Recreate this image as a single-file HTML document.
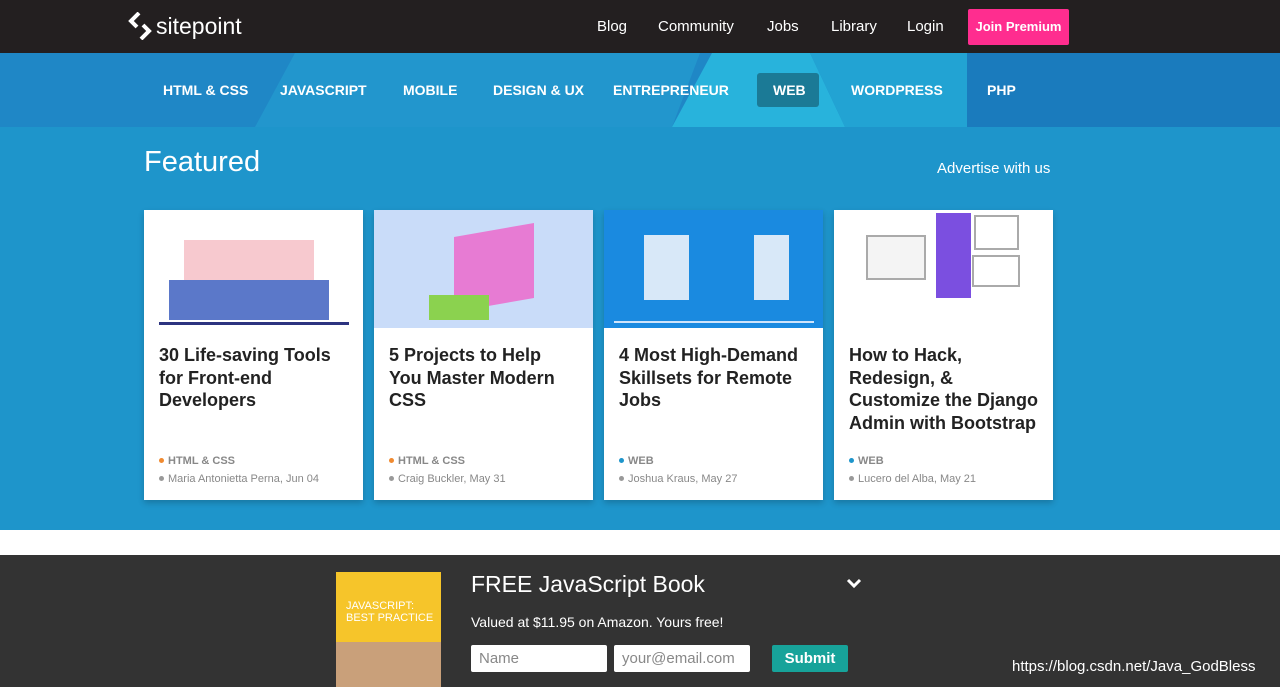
<!DOCTYPE html>
<html><head><meta charset="utf-8"><style>
*{margin:0;padding:0;box-sizing:border-box}
body{width:1280px;height:687px;overflow:hidden;font-family:"Liberation Sans",sans-serif;background:#fff;position:relative}
.hdr{position:absolute;left:0;top:0;width:1280px;height:53px;background:#231f20}
.logo{position:absolute;left:128px;top:12px;color:#fff;font-size:23px;display:flex;align-items:center;gap:4px}
.tnav{position:absolute;top:18px;color:#fff;font-size:15px}
.jp{position:absolute;left:968px;top:9px;width:101px;height:36px;background:#ff2d8f;color:#fff;font-size:13px;font-weight:bold;text-align:center;line-height:36px;border-radius:2px}
.nav{position:absolute;left:0;top:53px;width:1280px;height:74px;background:#1f87c6;overflow:hidden}
.nav span{position:absolute;top:29px;color:#fff;font-size:14px;font-weight:bold}
.feat{position:absolute;left:0;top:127px;width:1280px;height:403px;background:#1e95cb}
.card{position:absolute;top:210px;width:219px;height:290px;background:#fff;box-shadow:0 3px 6px rgba(0,0,0,.2)}
.img{height:118px;position:relative;overflow:hidden}
.t{position:absolute;left:15px;top:134px;width:190px;font-size:18px;font-weight:bold;color:#222;line-height:22.5px}
.m{position:absolute;left:15px;font-size:11px;color:#888}
.m i{display:inline-block;width:5px;height:5px;border-radius:50%;margin-right:4px;vertical-align:1px}
.bot{position:absolute;left:0;top:555px;width:1280px;height:132px;background:#333}
</style></head><body>
<div class="hdr">
<div class="logo"><svg width="24" height="28" viewBox="0 0 24 28"><path d="M11 1L3 9l6 6M13 27l8-8-6-6" stroke="#fff" stroke-width="4" fill="none"/></svg>sitepoint</div>
<div class="tnav" style="left:597px">Blog</div>
<div class="tnav" style="left:658px">Community</div>
<div class="tnav" style="left:767px">Jobs</div>
<div class="tnav" style="left:831px">Library</div>
<div class="tnav" style="left:907px">Login</div>
<div class="jp">Join Premium</div>
</div>
<div class="nav">
<svg width="1280" height="74" style="position:absolute;left:0;top:0"><polygon points="295,0 700,0 672,74 255,74" fill="#2296cd"/><polygon points="712,0 810,0 845,74 672,74" fill="#28b3dc"/><polygon points="810,0 967,0 967,74 845,74" fill="#22a3d3"/><rect x="967" y="0" width="313" height="74" fill="#1a7bbd"/></svg>
<span style="left:163px">HTML &amp; CSS</span>
<span style="left:280px">JAVASCRIPT</span>
<span style="left:403px">MOBILE</span>
<span style="left:493px">DESIGN &amp; UX</span>
<span style="left:613px">ENTREPRENEUR</span>
<div style="position:absolute;left:757px;top:20px;width:62px;height:34px;background:#1b7a96;border-radius:3px"></div>
<span style="left:773px">WEB</span>
<span style="left:851px">WORDPRESS</span>
<span style="left:987px">PHP</span>
</div>
<div class="feat">
<div style="position:absolute;left:144px;top:19px;color:#fff;font-size:29px">Featured</div>
<div style="position:absolute;left:937px;top:33px;color:#fff;font-size:15px">Advertise with us</div>
</div>
<div class="card" style="left:144px"><div class="img" style="background:#fff"><div style="position:absolute;left:40px;top:30px;width:130px;height:70px;background:#f7c9cf"></div><div style="position:absolute;left:25px;top:70px;width:160px;height:40px;background:#5b78c9"></div><div style="position:absolute;left:15px;top:112px;width:190px;height:3px;background:#2d3480"></div></div>
<div class="t">30 Life-saving Tools for Front-end Developers</div>
<div class="m" style="top:245px;font-weight:bold"><i style="background:#f08a30"></i>HTML &amp; CSS</div>
<div class="m" style="top:263px"><i style="background:#999"></i>Maria Antonietta Perna, Jun 04</div></div>
<div class="card" style="left:374px"><div class="img" style="background:#c9dcf9"><div style="position:absolute;left:80px;top:20px;width:80px;height:75px;background:#e77bd3;transform:skewY(-10deg)"></div><div style="position:absolute;left:55px;top:85px;width:60px;height:25px;background:#8bd24f"></div></div>
<div class="t" style="width:175px">5 Projects to Help You Master Modern CSS</div>
<div class="m" style="top:245px;font-weight:bold"><i style="background:#f08a30"></i>HTML &amp; CSS</div>
<div class="m" style="top:263px"><i style="background:#999"></i>Craig Buckler, May 31</div></div>
<div class="card" style="left:604px"><div class="img" style="background:#1a8ae0"><div style="position:absolute;left:40px;top:25px;width:45px;height:65px;background:#d8e8f8"></div><div style="position:absolute;left:150px;top:25px;width:35px;height:65px;background:#d8e8f8"></div><div style="position:absolute;left:10px;top:111px;width:200px;height:2px;background:#cfe4fb"></div></div>
<div class="t">4 Most High-Demand Skillsets for Remote Jobs</div>
<div class="m" style="top:245px;font-weight:bold"><i style="background:#1e95cb"></i>WEB</div>
<div class="m" style="top:263px"><i style="background:#999"></i>Joshua Kraus, May 27</div></div>
<div class="card" style="left:834px"><div class="img" style="background:#fff"><div style="position:absolute;left:102px;top:3px;width:35px;height:85px;background:#7b4fe0"></div><div style="position:absolute;left:32px;top:25px;width:60px;height:45px;border:2px solid #aaa;background:#f4f4f4"></div><div style="position:absolute;left:140px;top:5px;width:45px;height:35px;border:2px solid #aaa"></div><div style="position:absolute;left:138px;top:45px;width:48px;height:32px;border:2px solid #aaa"></div></div>
<div class="t">How to Hack, Redesign, &amp; Customize the Django Admin with Bootstrap</div>
<div class="m" style="top:245px;font-weight:bold"><i style="background:#1e95cb"></i>WEB</div>
<div class="m" style="top:263px"><i style="background:#999"></i>Lucero del Alba, May 21</div></div>
<div class="bot">
<div style="position:absolute;left:336px;top:17px;width:105px;height:115px;background:#f6c52a"><div style="position:absolute;left:10px;top:28px;color:#fff;font-size:11px;line-height:12px;white-space:nowrap">JAVASCRIPT:<br>BEST PRACTICE</div><div style="position:absolute;left:0;top:70px;width:105px;height:45px;background:#c9a07a"></div></div>
<div style="position:absolute;left:471px;top:16px;color:#fff;font-size:23px">FREE JavaScript Book</div>
<svg style="position:absolute;left:846px;top:22px" width="16" height="12"><path d="M2 3l6 6 6-6" stroke="#fff" stroke-width="3" fill="none"/></svg>
<div style="position:absolute;left:471px;top:59px;color:#fff;font-size:14px">Valued at $11.95 on Amazon. Yours free!</div>
<div style="position:absolute;left:471px;top:90px;width:136px;height:27px;background:#fff;border-radius:2px;color:#888;font-size:15px;padding:5px 8px">Name</div>
<div style="position:absolute;left:614px;top:90px;width:136px;height:27px;background:#fff;border-radius:2px;color:#888;font-size:15px;padding:5px 8px">your@email.com</div>
<div style="position:absolute;left:772px;top:90px;width:76px;height:27px;background:#17a39a;border-radius:2px;color:#fff;font-size:15px;font-weight:bold;text-align:center;line-height:27px">Submit</div>
<div style="position:absolute;left:1012px;top:103px;color:#fff;font-size:15px">https://blog.csdn.net/Java_GodBless</div>
</div>
</body></html>
